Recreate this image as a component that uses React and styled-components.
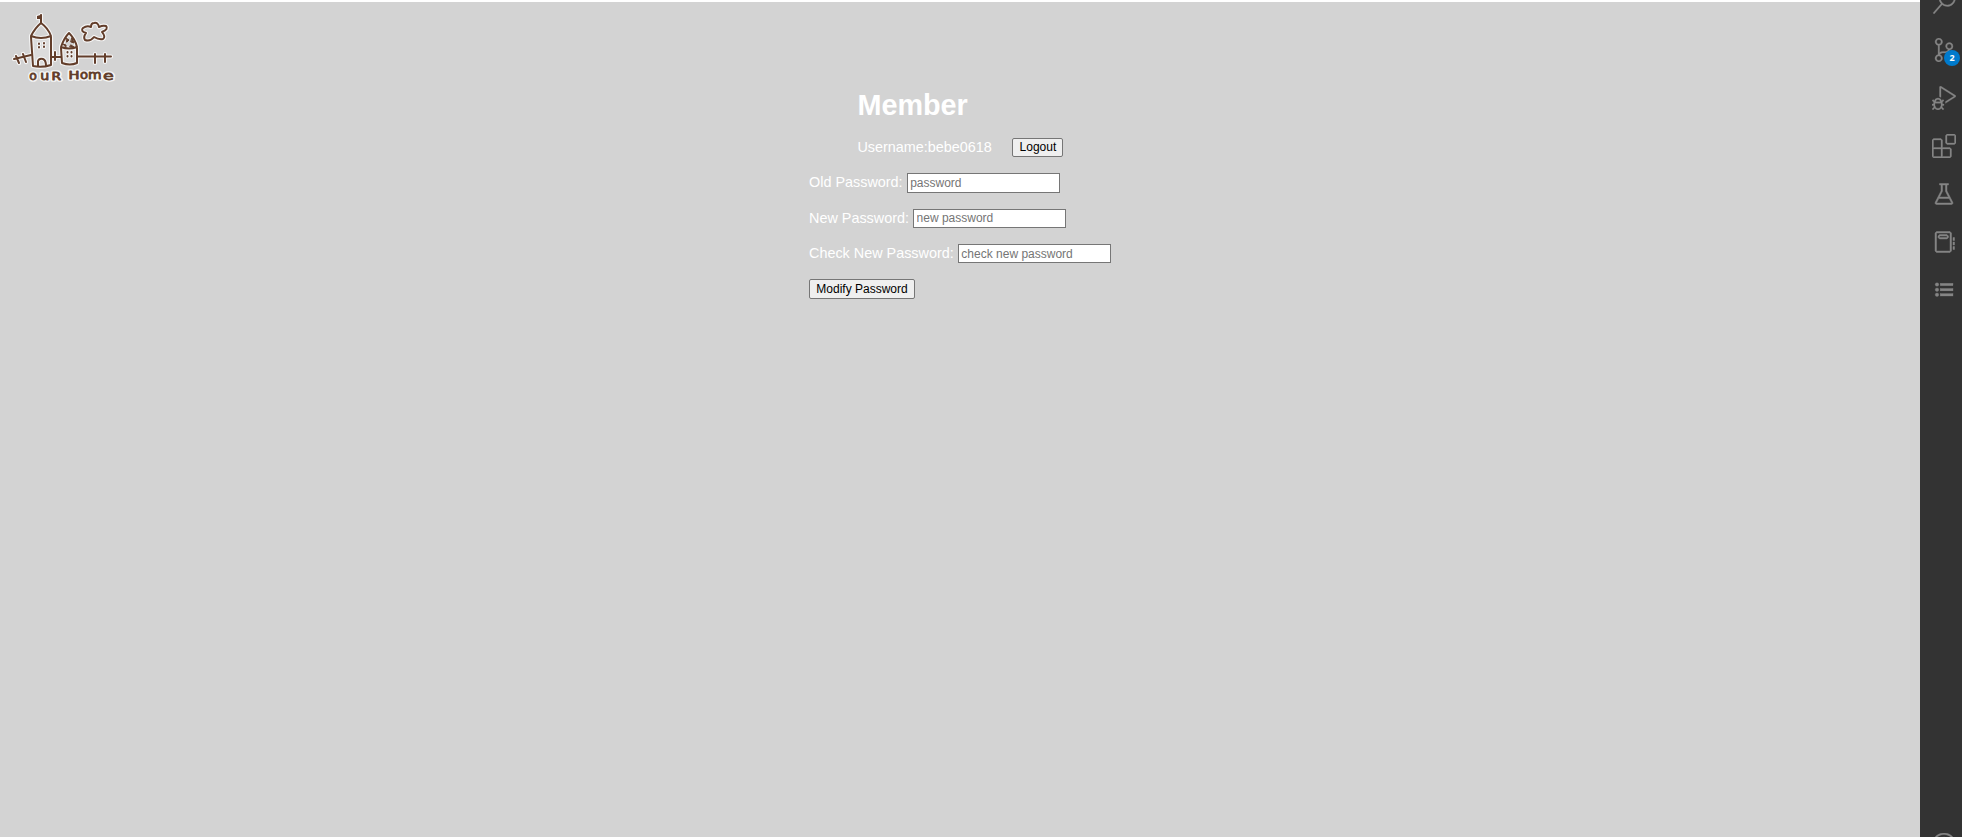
import React from 'react';
import styled, { createGlobalStyle } from 'styled-components';
import {
  VscSearch, VscSourceControl, VscDebugAlt, VscExtensions,
  VscBeaker, VscNotebook, VscAccount,
} from 'react-icons/vsc';

const GlobalStyle = createGlobalStyle`
  * { box-sizing: border-box; }
  body { margin: 0; background: #fff; font-family: "Liberation Sans", Arial, sans-serif; }
`;
const Screen = styled.div`
  display: flex;
  height: 837px;
  overflow: hidden;
`;
const Page = styled.main`
  flex: 1;
  margin-top: 2px;
  background: #d3d3d3;
  color: #fff;
  font-size: 14.4px;
`;
const Header = styled.header`
  height: 85px;
  padding: 8px 0 0 8px;
`;
const Logo = styled.svg`
  display: block;
  width: 112px;
  height: 76px;
`;
const Profile = styled.section`
  margin-left: 857.4px;
`;
const Title = styled.h1`
  margin: 0 0 13px;
  font-size: 28.8px;
  line-height: 37px;
`;
const Row = styled.div`
  display: flex;
  align-items: center;
  height: 21px;
  gap: ${(p) => p.$gap || '4px'};
  white-space: nowrap;
`;
const Caption = styled.span`
  margin-bottom: 1px;
`;
const Form = styled.form`
  display: flex;
  flex-direction: column;
  gap: 14.35px;
  margin: 14.45px 0 0 809px;
`;
const Input = styled.input`
  width: 153px;
  height: 19.5px;
  padding: 1px 2px 1px 2.6px;
  border: 1px solid #767676;
  border-radius: 0;
  font: 12px "Liberation Sans", Arial, sans-serif;
  &::placeholder { color: #757575; }
`;
const Button = styled.button`
  width: ${(p) => p.$width};
  height: 19.5px;
  padding: 0 0 ${(p) => p.$lift || '0'};
  border: 1px solid #767676;
  border-radius: 2px;
  background: #efefef;
  color: #000;
  font: 12px "Liberation Sans", Arial, sans-serif;
`;
const ActivityBar = styled.aside`
  display: flex;
  flex-direction: column;
  justify-content: space-between;
  width: 42px;
  height: 869px;
  background: #333;
  color: #858585;
`;
const Actions = styled.nav`
  margin-top: -22px;
`;
const Action = styled.div`
  position: relative;
  display: grid;
  place-items: center;
  width: 48px;
  height: 48px;
  svg { width: 24px; height: 24px; stroke: currentColor; stroke-width: 0.3px; }
`;
const Badge = styled.span`
  position: absolute;
  left: 24px;
  top: 24px;
  width: 16px;
  height: 16px;
  border-radius: 8px;
  background: #007acc;
  color: #fff;
  font: 700 9px/16px "Noto Sans", sans-serif;
  text-align: center;
`;

// Each entry: character, left edge, baseline, font size, drawn width.
const letters = [
  ['o', 29.3, 79.8, 12, 7.6], ['u', 40.2, 79.8, 12, 9], ['R', 51.6, 79.8, 10, 9.6],
  ['H', 68.6, 78.9, 10.5, 11], ['o', 80, 78.8, 11.5, 8], ['m', 88, 79.3, 12, 13.6], ['e', 103, 79.6, 13, 10.7],
];

function Drawing() {
  return (
    <>
      <path d="M41 23V15M41 23Q35 28 31 36 41 40 51 36 48 28 41 23M31 37 33 66Q42 68 51 65V37M38 66V61Q39 58 43 59 46 60 46 66" />
      <path d="M61 47Q64 38 69 33 75 39 77 47 69 50 61 47ZM61 48 62 63Q70 66 77 63V48" />
      <path d="M14 59 31 55M16 56 19 63M23 54 26 62M51 57H61M55 52V60M78 56.5H111M95 54V63M105 54V62" />
      <path d="M91 27Q87 25 83 28 80 31 86 33 83 37 85 40 90 42 94 37 99 40 103 39 106 37 102 32 109 29 106 26 103 25 99 27 98 22 94 23 91 23 91 27Z" />
      <path d="M39 43.5v.4M44 43v.4M39 47v.4M44 46.5v.4M67.5 52v.4M71.5 52v.4M67.5 56v.4M71.5 56v.4" />
    </>
  );
}

function Lettering() {
  return letters.map(([char, x, y, size, width]) => (
    <text key={x} x={x} y={y} fontSize={size} textLength={width} lengthAdjust="spacingAndGlyphs">{char}</text>
  ));
}

function HomeLogo() {
  return (
    <Logo viewBox="8 10 112 76" aria-label="Our Home" strokeLinecap="round" strokeLinejoin="round" fontFamily="DejaVu Sans, sans-serif">
      <path d="M31 37 33 66Q42 68 51 65V37ZM61 48 62 63Q70 66 77 63V48Z" fill="#dcdcdc" />
      <g fill="none" stroke="#f5f5f5" strokeWidth="4.2"><Drawing /></g>
      <g fill="none" stroke="#623d2a" strokeWidth="2"><Drawing /></g>
      <path d="M37 16 42 14.5 42 19 37 19Z" fill="#623d2a" stroke="#f5f5f5" strokeWidth="2" paintOrder="stroke" />
      <path d="M41 15v5" stroke="#623d2a" strokeWidth="2" />
      <path d="M66 38l3 2-2 2zM72 38l2 5-3-1zM63 44l3 1v2zM71 45l3 2h-4z" fill="#623d2a" stroke="#623d2a" strokeWidth="1" />
      <g fill="#623d2a" stroke="#f5f5f5" strokeWidth="3.4"><Lettering /></g>
      <g fill="#623d2a" stroke="#623d2a" strokeWidth="0.8"><Lettering /></g>
    </Logo>
  );
}

function BulletList() {
  return (
    <svg viewBox="0 0 24 24" fill="currentColor">
      {[6.5, 11.7, 16.8].map((y) => (
        <g key={y}>
          <circle cx="5" cy={y} r="1.8" />
          <rect x="8.2" y={y - 1.2} width="12.8" height="2.4" />
        </g>
      ))}
    </svg>
  );
}

const actions = [
  VscSearch, VscSourceControl, VscDebugAlt, VscExtensions,
  VscBeaker, VscNotebook, BulletList,
];
const fields = [
  ['Old Password:', 'password'],
  ['New Password:', 'new password'],
  ['Check New Password:', 'check new password'],
];

export default function App() {
  return (
    <>
      <GlobalStyle />
      <Screen>
        <Page>
          <Header><HomeLogo /></Header>
          <Profile>
            <Title>Member</Title>
            <Row $gap="20.6px">
              <Caption>Username:bebe0618</Caption>
              <Button type="button" $width="51px" $lift="1px">Logout</Button>
            </Row>
          </Profile>
          <Form>
            {fields.map(([label, placeholder]) => (
              <Row as="label" key={label}>
                <Caption>{label}</Caption>
                <Input type="password" placeholder={placeholder} />
              </Row>
            ))}
            <Row><Button type="button" $width="106px">Modify Password</Button></Row>
          </Form>
        </Page>
        <ActivityBar>
          <Actions>
            {actions.map((Icon, i) => (
              <Action key={i}>
                <Icon />
                {i === 1 && <Badge>2</Badge>}
              </Action>
            ))}
          </Actions>
          <Action><VscAccount /></Action>
        </ActivityBar>
      </Screen>
    </>
  );
}
